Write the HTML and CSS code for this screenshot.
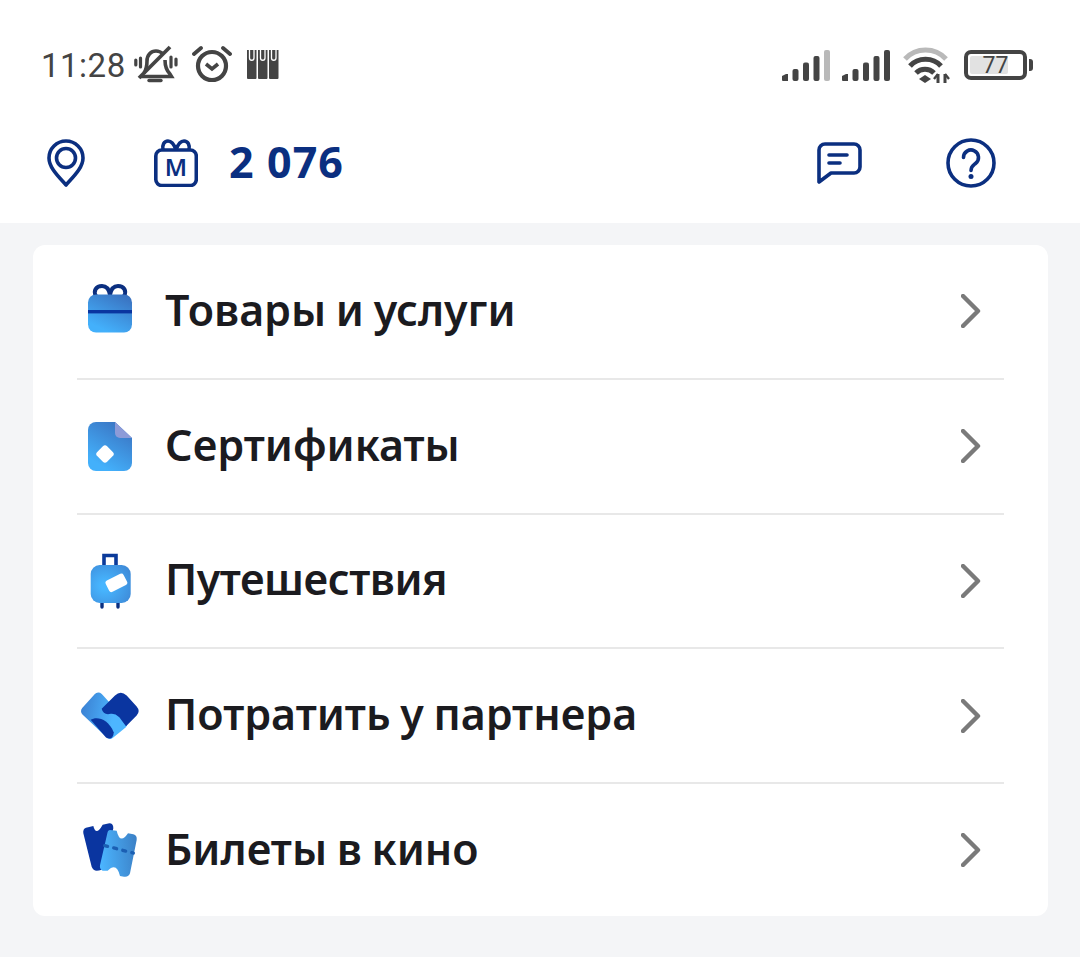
FILE: index.html

```html
<!DOCTYPE html>
<html lang="ru">
<head>
  <meta charset="UTF-8">
  <meta name="viewport" content="width=device-width, initial-scale=1.0">
  <title>Потратить мили</title>
  <link rel="stylesheet" href="styles.css">
</head>
<body>
  <svg class="defs" width="0" height="0" aria-hidden="true">
    <defs>
      <linearGradient id="blue" x1="0.8" y1="0" x2="0.25" y2="1">
        <stop offset="0" stop-color="#3a72c0"/>
        <stop offset="0.9" stop-color="#43b0fb"/>
      </linearGradient>
      <radialGradient id="blueRound" cx="0.35" cy="0.55" r="0.9">
        <stop offset="0.1" stop-color="#47b6ff"/>
        <stop offset="1" stop-color="#3c80cf"/>
      </radialGradient>
      <linearGradient id="blueLeft" gradientUnits="userSpaceOnUse" x1="33" y1="90" x2="130" y2="110">
        <stop offset="0" stop-color="#3b82d4"/>
        <stop offset="1" stop-color="#4db6ff"/>
      </linearGradient>
      <linearGradient id="blueTicket" gradientUnits="userSpaceOnUse" x1="90" y1="530" x2="200" y2="520">
        <stop offset="0" stop-color="#4bb5ff"/>
        <stop offset="1" stop-color="#3c82c8"/>
      </linearGradient>
    </defs>
  </svg>

  <header class="top">
    <div class="status">
      <div class="status-left">
        <span class="time">11:28</span>
        <svg class="ic-bell" width="45" height="40" viewBox="0 0 45 40" fill="none" stroke="#444" stroke-width="3.6">
          <path d="M10 28c2-3 3-7 3-12 0-6 4-10 9-10 3 0 5 1 7 3M31 15c0 6 2 11 5 14l1.500 2.500H6"/>
          <path d="M15 35.500h12" stroke-width="3.400" stroke-linecap="round"/>
          <path d="M5 33 36 2" stroke-width="3.800"/>
          <path d="M6.500 13v9M1.800 15v5M37 12v10M42 14v6" stroke-width="3.200" stroke-linecap="round"/>
        </svg>
        <svg class="ic-alarm" width="40" height="38" viewBox="0 0 40 38" fill="none" stroke="#444">
          <circle cx="20" cy="21" r="14" stroke-width="4.200"/>
          <path d="M14 19l6 5 6-5" stroke-width="3.600"/>
          <path d="M2 9l7-6M38 9l-7-6" stroke-width="3.800" stroke-linecap="round"/>
        </svg>
        <svg class="ic-sim" width="32" height="30" viewBox="0 0 32 30">
          <path fill="#444" d="M0 0h9.500v28a1 1 0 0 1-1 1H1a1 1 0 0 1-1-1zM11 0h9.500v28a1 1 0 0 1-1 1H12a1 1 0 0 1-1-1zM22 0h9.500v28a1 1 0 0 1-1 1H23a1 1 0 0 1-1-1z"/>
          <path fill="none" stroke="#fff" stroke-width="1.300" d="M2.500 0v8a2.200 2.200 0 0 0 4.500 0V0M13.500 0v8a2.200 2.200 0 0 0 4.500 0V0M24.500 0v8a2.200 2.200 0 0 0 4.500 0V0"/>
        </svg>
      </div>
      <div class="status-right">
        <svg class="ic-signal" width="48" height="32" viewBox="0 0 48 32">
          <g fill="#444">
            <path d="M0 27l4-2h2v7H1a1 1 0 0 1-1-1z"/>
            <rect x="10.500" y="20" width="6" height="12" rx="2"/>
            <rect x="21" y="13.500" width="6" height="18.500" rx="2"/>
            <rect x="31.500" y="7" width="6" height="25" rx="2"/>
          </g>
          <rect x="42" y="1" width="6" height="31" rx="2" fill="#b9b9b9"/>
        </svg>
        <svg class="ic-signal" width="48" height="32" viewBox="0 0 48 32">
          <g fill="#444">
            <path d="M0 27l4-2h2v7H1a1 1 0 0 1-1-1z"/>
            <rect x="10.500" y="20" width="6" height="12" rx="2"/>
            <rect x="21" y="13.500" width="6" height="18.500" rx="2"/>
            <rect x="31.500" y="7" width="6" height="25" rx="2"/>
            <rect x="42" y="1" width="6" height="31" rx="2"/>
          </g>
        </svg>
        <svg class="ic-wifi" width="47" height="36" viewBox="0 0 47 36" fill="none" stroke="#444" stroke-width="5">
          <path d="M2 12C13 0 32 0 43 12" stroke="#b9b9b9"/>
          <path d="M7 19C15 10 30 10 38 19"/>
          <path d="M13 26c5-5 13-5 18 0"/>
          <path d="M16 32l6-4 6 4-6 4z" fill="#444" stroke="none"/>
          <path d="M35 27v9M42 36v-9" stroke-width="3"/>
          <path d="M31 32l4-5M42 27l4 5" stroke-width="2.400"/>
        </svg>
        <div class="battery">
          <div class="battery-box"><span class="battery-fill"></span><span class="battery-num">77</span></div>
          <span class="battery-tip"></span>
        </div>
      </div>
    </div>

    <div class="bar">
      <svg class="ic-pin" width="38" height="48" viewBox="0 0 38 48" fill="none" stroke="#0b2f80" stroke-width="3.6">
        <path d="M19 46C12 38 2 29 2 19a17 17 0 0 1 34 0c0 10-10 19-17 27z" stroke-linejoin="round"/>
        <circle cx="19" cy="19" r="9.500"/>
      </svg>
      <svg class="ic-miles" width="44" height="48" viewBox="0 0 44 48" fill="none" stroke="#0b2f80" stroke-width="3.6">
        <rect x="1.800" y="11" width="40.500" height="35.500" rx="6"/>
        <path d="M22 11c-2-6-5-9-8-9-4 0-6 4-5 9M22 11c2-6 5-9 8-9 4 0 6 4 5 9"/>
        <text x="22" y="37" text-anchor="middle" class="miles-m">М</text>
      </svg>
      <span class="points">2 076</span>
      <svg class="ic-chat" width="46" height="42" viewBox="0 0 46 42" fill="none" stroke="#0b2f80" stroke-width="3.600" stroke-linejoin="round">
        <path d="M9 2h29a6 6 0 0 1 6 6v17a6 6 0 0 1-6 6H15L3 40V8a6 6 0 0 1 6-6z"/>
        <path d="M13 13h18M13 21h11" stroke-linecap="round"/>
      </svg>
      <svg class="ic-help" width="50" height="50" viewBox="0 0 50 50" fill="none" stroke="#0b2f80" stroke-width="3.600">
        <circle cx="25" cy="25" r="23"/>
        <path d="M17.500 19.500a7.500 7.500 0 1 1 12 6c-2.500 2-4.500 3-4.500 7" stroke-linecap="round"/>
        <circle cx="25" cy="38.500" r="2.500" fill="#0b2f80" stroke="none"/>
      </svg>
    </div>
  </header>

  <main class="card">
    <a class="row">
      <svg class="row-icon" width="60" height="60" viewBox="0 0 60 60" fill="none">
        <path d="M30 14c-1-6-4-9-8-9-6 0-9 5-6 10M30 14c1-6 4-9 8-9 6 0 9 5 6 10" stroke="#0b2f80" stroke-width="4"/>
        <rect x="8" y="13.500" width="44" height="38" rx="8" fill="url(#blue)"/>
        <rect x="8" y="29" width="44" height="3.400" fill="#0a35a0"/>
      </svg>
      <span class="row-title">Товары и услуги</span>
      <svg class="chevron" width="20" height="34" viewBox="0 0 20 34" fill="none"><path d="M2 2l15 15L2 32"/></svg>
    </a>
    <a class="row">
      <svg class="row-icon" width="60" height="60" viewBox="0 0 60 60" fill="none">
        <path d="M16 6h19l17 16v25a8 8 0 0 1-8 8H16a8 8 0 0 1-8-8V14a8 8 0 0 1 8-8z" fill="url(#blue)"/>
        <path d="M35 6l17 16H40a5 5 0 0 1-5-5z" fill="#8d9bd8"/>
        <rect x="18" y="31" width="14" height="14" rx="3" transform="rotate(45 25 38)" fill="#fff"/>
      </svg>
      <span class="row-title">Сертификаты</span>
      <svg class="chevron" width="20" height="34" viewBox="0 0 20 34" fill="none"><path d="M2 2l15 15L2 32"/></svg>
    </a>
    <a class="row">
      <svg class="row-icon" width="60" height="60" viewBox="0 0 60 60" fill="none">
        <path d="M24 14V4.500h12V14" stroke="#0b3a9a" stroke-width="3.600"/>
        <path d="M22 50v6M38 50v6" stroke="#0b2f80" stroke-width="3.400" stroke-linecap="round"/>
        <rect x="10.700" y="14" width="40" height="38" rx="9" fill="url(#blueRound)"/>
        <rect x="26.500" y="25.500" width="20" height="12.500" rx="2.500" transform="rotate(-27 36.500 32)" fill="#fff"/>
      </svg>
      <span class="row-title row-title-tight">Путешествия</span>
      <svg class="chevron" width="20" height="34" viewBox="0 0 20 34" fill="none"><path d="M2 2l15 15L2 32"/></svg>
    </a>
    <a class="row">
      <svg class="row-icon" width="60" height="60" viewBox="30 16.500 180 180" fill="none">
        <path d="M47 92 85 50 158 130 120 161z" fill="url(#blueLeft)" stroke="url(#blueLeft)" stroke-width="28" stroke-linejoin="round"/>
        <path d="M62 118C80 106 115 115 131 155 131 171 120 179 108 171z" fill="#0a35a0"/>
        <path d="M95 85 135 45Q152 29 170 45L200 78Q212 92 200 105L168 137 148 110Q135 98 122 100 100 105 95 85z" fill="#0a35a0"/>
      </svg>
      <span class="row-title">Потратить у партнера</span>
      <svg class="chevron" width="20" height="34" viewBox="0 0 20 34" fill="none"><path d="M2 2l15 15L2 32"/></svg>
    </a>
    <a class="row">
      <svg class="row-icon" width="60" height="60" viewBox="30 420 180 180" fill="none">
        <path d="M48 443 70 438Q78 470 98 434L118 430Q130 430 130 445L100 565Q95 572 80 572 70 572 65 560L40 460Q38 447 48 443z" fill="#0a35a0"/>
        <path d="M120 450 140 452Q150 495 174 460L190 463Q202 466 200 480L180 580Q176 592 162 590L150 588Q140 545 113 572L98 572Q88 568 90 556L112 460Q114 450 120 450z" fill="url(#blueTicket)"/>
        <path d="M104 497 190 519" stroke="#1b5fb3" stroke-width="10" stroke-linecap="round" stroke-dasharray="9 19"/>
      </svg>
      <span class="row-title">Билеты в кино</span>
      <svg class="chevron" width="20" height="34" viewBox="0 0 20 34" fill="none"><path d="M2 2l15 15L2 32"/></svg>
    </a>
  </main>
</body>
</html>
```

FILE: styles.css

```css
body { margin: 0; background: #f4f5f7; font-family: "Noto Sans", "Open Sans", sans-serif; }
.defs { display: block; height: 0; }
.top { background: #fff; height: 223px; }

.status { display: flex; justify-content: space-between; align-items: center; height: 50px; padding: 40px 47px 0 41px; }
.status-left, .status-right { display: flex; align-items: center; }
.time { font-family: Roboto, sans-serif; font-size: 33px; color: #444; letter-spacing: 0.5px; margin-right: 8px; }
.ic-alarm { margin-left: 13px; margin-top: -2px; }
.ic-sim { margin-left: 15px; }
.ic-signal { margin-right: 12px; }
.ic-wifi { margin-left: 1px; margin-right: 14px; }

.battery { display: flex; align-items: center; }
.battery-box { position: relative; display: flex; align-items: center; justify-content: center; box-sizing: border-box; width: 63px; height: 30px; border: 4px solid #444; border-radius: 7px; }
.battery-fill { position: absolute; left: 2px; top: 2px; bottom: 2px; width: 38px; background: #e2e2e2; border-radius: 2px; }
.battery-num { position: relative; font-family: Roboto, sans-serif; font-size: 23px; color: #444; }
.battery-tip { width: 4px; height: 12px; margin-left: 2px; background: #444; border-radius: 0 3px 3px 0; }

.bar { display: flex; align-items: center; height: 48px; padding: 49px 84px 0 47px; }
.ic-miles { margin-left: 69px; }
.points { margin-left: 31px; padding-bottom: 3px; font-size: 43px; font-weight: 700; color: #0b2f80; letter-spacing: 1.1px; }
.ic-chat { margin-left: auto; }
.ic-help { margin-left: 84px; }
.miles-m { font-family: "Noto Sans", sans-serif; font-size: 24px; font-weight: 600; fill: #0b2f80; stroke: none; }

.card { margin: 22px 32px 0 33px; padding: 0 44px; background: #fff; border-radius: 12px; }
.row { display: flex; align-items: center; box-sizing: border-box; height: 134.8px; border-bottom: 2px solid #e8e8e8; }
.row:last-child { height: 131.8px; border-bottom: none; }
.row-icon { margin-left: 3px; }
.row-title { margin-left: 25px; padding-bottom: 4px; font-size: 43px; font-weight: 600; color: #1b1b1f; word-spacing: -1.5px; }
.row-title-tight { letter-spacing: -0.5px; }
.chevron { margin-left: auto; margin-right: 23px; }
.chevron path { stroke: #7a7a7a; stroke-width: 4.4; stroke-linecap: round; stroke-linejoin: round; }
```
